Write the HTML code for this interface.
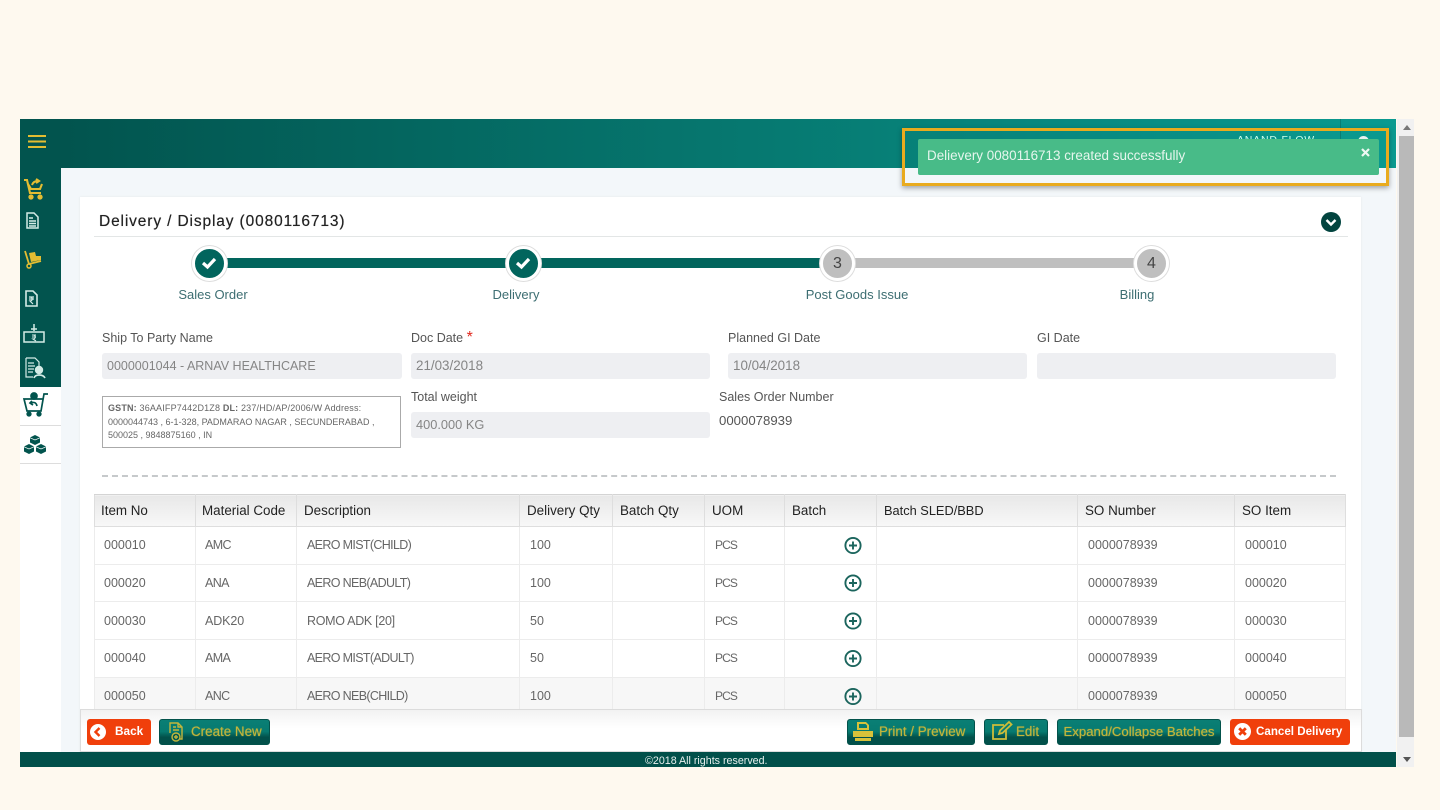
<!DOCTYPE html>
<html><head><meta charset="utf-8"><style>
html,body{margin:0;padding:0;width:1440px;height:810px;overflow:hidden;background:#fef9ef;font-family:"Liberation Sans",sans-serif;}
.a{position:absolute;white-space:nowrap;}
.t{position:absolute;white-space:nowrap;font-size:12.5px;line-height:16px;color:#555;}
.inp{position:absolute;background:#eeeff2;border-radius:3px;height:26px;line-height:26px;font-size:13.4px;color:#858585;padding-left:5px;box-sizing:border-box;}
.c{position:absolute;border-radius:50%;box-sizing:border-box;}
.lbl{position:absolute;white-space:nowrap;font-size:13px;line-height:16px;color:#3d6e72;transform:translateX(-50%);}
table{position:absolute;left:94px;top:494px;width:1252px;border-collapse:collapse;table-layout:fixed;font-size:12.5px;background:#fff;}
th{height:32px;padding:0 0 0 6px;box-sizing:border-box;text-align:left;font-weight:normal;color:#222;background:linear-gradient(#e8e8e8,#f8f8f8);border:1px solid #dedede;border-top:1px solid #d4d4d4;font-size:13.4px;}
td{padding:0 0 0 9px;box-sizing:border-box;color:#666;border:1px solid #ececec;height:37.7px;}
th:nth-child(n+3){padding-left:7px;}
td:nth-child(n+3){padding-left:10px;}
tr.l td{background:#f7f7f7;}
td.d{letter-spacing:-.65px;}
td.m{letter-spacing:-.6px;}
td.u{font-size:12px;letter-spacing:-.9px;}
.btn{position:absolute;top:719px;height:26px;border-radius:3px;font-size:13.4px;line-height:25px;box-sizing:border-box;white-space:nowrap;}
.g{background:linear-gradient(#0a7f75 0%,#077a70 48%,#02504a 72%,#02504a 100%);color:#c2b63c;border:1px solid #03524b;text-shadow:0 0 1px #a9a23a;line-height:23px;}
.r{background:#f03f0b;color:#fff;font-weight:bold;font-size:11.8px;}
svg{position:absolute;overflow:visible;}
</style></head><body>
<div class="a" style="left:20px;top:119px;width:1376px;height:648px;background:#f3f7fa;"></div>
<div class="a" style="left:61px;top:119px;width:1335px;height:49px;background:linear-gradient(90deg,#02544e,#0a9a90);"></div>
<div class="a" style="left:20px;top:119px;width:41px;height:268px;background:#02544e;"></div>
<div class="a" style="left:20px;top:387px;width:41px;height:380px;background:#fff;"></div>
<div class="a" style="left:20px;top:425px;width:41px;height:1px;background:#ddd;"></div>
<div class="a" style="left:20px;top:463px;width:41px;height:1px;background:#ddd;"></div>
<svg style="left:28px;top:134px" width="18" height="15"><path d="M0 2H18M0 7.500H18M0 13H18" stroke="#e3bd32" stroke-width="2"/></svg>
<svg style="left:24px;top:179px" width="20" height="21" fill="none" stroke="#e3bd32" stroke-width="2.100"><path d="M0 1H3L6 14H17M4 5L7 10H16L18 5"/><path d="M8 6C9 3 11 2 14 2M12 0L15 2L12 4"/><circle cx="7" cy="18" r="1.600" fill="#e3bd32"/><circle cx="16" cy="18" r="1.600" fill="#e3bd32"/></svg>
<svg style="left:26px;top:212px" width="13" height="17" fill="none" stroke="#d4ebe6" stroke-width="1.500"><path d="M1 1H8L12 5V16H1Z"/><path d="M3 6H7M3 9H10M3 11.500H10M3 14H10" stroke-width="1.400"/></svg>
<svg style="left:24px;top:250px" width="18" height="19" fill="none"><path d="M1 1L5 14" stroke="#e3bd32" stroke-width="1.800"/><path d="M5 14L17 11" stroke="#e3bd32" stroke-width="1.800"/><circle cx="5" cy="16" r="2" stroke="#e3bd32" stroke-width="1.500"/><path d="M5 3L11 2L12 6L17 6L17 10L7 12Z" fill="#e3bd32"/></svg>
<svg style="left:25px;top:290px" width="13" height="17" fill="none" stroke="#d4ebe6" stroke-width="1.600"><path d="M1 1H8L12 5V16H1Z"/><path d="M4 7H9M4 9H9M5 7C8 7 8 11 5 11L8 14" stroke-width="1.200"/></svg>
<svg style="left:23px;top:324px" width="22" height="19" fill="none" stroke="#d4ebe6" stroke-width="1.500"><path d="M1 8H21V18H1Z"/><path d="M11 0V7M8 5H14" /><path d="M9 11H13M9 13H13M10 11C13 11 13 15 10 15L13 17" stroke-width="1.100"/></svg>
<svg style="left:25px;top:357px" width="23" height="24" fill="none" stroke="#d4ebe6" stroke-width="1.200"><path d="M1 1H10L14 5V9M1 1V20H8"/><path d="M3 6H9M3 9H10M3 12H9M3 15H8"/><circle cx="14" cy="13" r="3.600" fill="#d4ebe6"/><path d="M9 21C10 17 18 17 20 21" stroke-width="1.700"/></svg>
<svg style="left:23px;top:392px" width="26" height="25" fill="none" stroke="#02544e" stroke-width="1.700"><path d="M25 2H21L18 19H4L1 7H20"/><circle cx="6" cy="22" r="1.800" fill="#02544e"/><circle cx="16" cy="22" r="1.800" fill="#02544e"/><circle cx="11" cy="4" r="3" fill="#02544e"/><path d="M14 14C13 10 11 10 7 11M9 9L7 11L10 13"/></svg>
<svg style="left:23px;top:435px" width="24" height="20" fill="#02544e"><path d="M12 0L17 2.500V7.500L12 10L7 7.500V2.500Z"/><path d="M6 9L11 11.500V16.500L6 19L1 16.500V11.500Z"/><path d="M18 9L23 11.500V16.500L18 19L13 16.500V11.500Z"/><path d="M7 2.800L12 5L17 2.800M1 11.800L6 14L11 11.800M13 11.800L18 14L23 11.800" stroke="#fff" stroke-width=".7" fill="none"/></svg>

<div class="a" style="left:1237px;top:134px;font-size:10.500px;line-height:12px;color:#cfe;letter-spacing:.8px;height:5px;overflow:hidden;">ANAND FLOW</div>
<div class="c" style="left:1358px;top:136px;width:11px;height:11px;background:#e8f0ee;"></div>
<div class="a" style="left:1340px;top:119px;width:1px;height:49px;background:#0a7d74;"></div>

<div class="a" style="left:1397px;top:119px;width:17px;height:648px;background:#f1f1f1;"></div>
<div class="a" style="left:1399px;top:136px;width:15px;height:601px;background:#b9b9b9;"></div>
<div class="a" style="left:1403px;top:125px;border:4px solid transparent;border-top:0;border-bottom:5px solid #777;"></div>
<div class="a" style="left:1403px;top:757px;border:4px solid transparent;border-bottom:0;border-top:5px solid #555;"></div>

<div class="a" style="left:80px;top:197px;width:1281px;height:556px;background:#fff;box-shadow:0 0 2px #e3e6e8;"></div>
<div class="a" style="left:99px;top:212px;font-size:15.500px;line-height:20px;color:#222;letter-spacing:.87px;text-shadow:0 0 .5px #444;">Delivery / Display (0080116713)</div>
<div class="a" style="left:94px;top:236px;width:1254px;height:1px;background:#e3e6e6;"></div>
<svg style="left:1321px;top:212px" width="20" height="20"><circle cx="10" cy="10" r="10" fill="#02443f"/><path d="M5.500 8L10 12.500L14.500 8" stroke="#fff" stroke-width="2.400" fill="none"/></svg>

<div class="a" style="left:225px;top:258px;width:600px;height:10px;background:#02655d;"></div>
<div class="a" style="left:850px;top:258px;width:290px;height:10px;background:#bfbfbf;"></div>
<div class="c" style="left:192px;top:246px;width:35px;height:35px;background:#02655d;border:3px solid #fff;box-shadow:0 0 0 1px #ddd;"></div>
<div class="c" style="left:506px;top:246px;width:35px;height:35px;background:#02655d;border:3px solid #fff;box-shadow:0 0 0 1px #ddd;"></div>
<svg style="left:201px;top:256px" width="16" height="14"><path d="M2 7L6.500 11L14 3" stroke="#fff" stroke-width="3.200" fill="none"/></svg>
<svg style="left:515px;top:256px" width="16" height="14"><path d="M2 7L6.500 11L14 3" stroke="#fff" stroke-width="3.200" fill="none"/></svg>
<div class="c" style="left:820px;top:246px;width:35px;height:35px;background:#bfbfbf;border:3px solid #fff;box-shadow:0 0 0 1px #ddd;text-align:center;font-size:16px;line-height:29px;color:#444;">3</div>
<div class="c" style="left:1134px;top:246px;width:35px;height:35px;background:#bfbfbf;border:3px solid #fff;box-shadow:0 0 0 1px #ddd;text-align:center;font-size:16px;line-height:29px;color:#444;">4</div>
<div class="lbl" style="left:213px;top:287px;">Sales Order</div>
<div class="lbl" style="left:516px;top:287px;">Delivery</div>
<div class="lbl" style="left:857px;top:287px;">Post Goods Issue</div>
<div class="lbl" style="left:1137px;top:287px;">Billing</div>

<div class="t" style="left:102px;top:330px;">Ship To Party Name</div>
<div class="t" style="left:411px;top:330px;">Doc Date <span style="color:#e0261c;font-size:16px;">*</span></div>
<div class="t" style="left:728px;top:330px;">Planned GI Date</div>
<div class="t" style="left:1037px;top:330px;">GI Date</div>
<div class="inp" style="left:102px;top:353px;width:300px;font-size:12.500px;">0000001044 - ARNAV HEALTHCARE</div>
<div class="inp" style="left:411px;top:353px;width:299px;">21/03/2018</div>
<div class="inp" style="left:728px;top:353px;width:299px;">10/04/2018</div>
<div class="inp" style="left:1037px;top:353px;width:299px;"></div>
<div class="a" style="left:102px;top:396px;width:299px;height:52px;border:1px solid #aaa;box-sizing:border-box;padding:5px 0 0 5px;font-size:9px;line-height:13.500px;color:#666;"><span style="letter-spacing:.17px;"><b>GSTN:</b> 36AAIFP7442D1Z8 <b>DL:</b> 237/HD/AP/2006/W Address:</span><br>0000044743 , 6-1-328, PADMARAO NAGAR , SECUNDERABAD ,<br>500025 , 9848875160 , IN</div>
<div class="t" style="left:411px;top:389px;">Total weight</div>
<div class="inp" style="left:411px;top:412px;width:299px;font-size:12.800px;">400.000 KG</div>
<div class="t" style="left:719px;top:389px;">Sales Order Number</div>
<div class="t" style="left:719px;top:413px;font-size:13.200px;">0000078939</div>
<div class="a" style="left:102px;top:475px;width:1234px;height:0;border-top:2px dashed #c6c9cb;"></div>

<div class="a" style="left:80px;top:494px;width:1281px;height:216px;overflow:hidden;">
<table style="left:14px;top:0;">
<colgroup><col style="width:101px"><col style="width:101px"><col style="width:223px"><col style="width:93px"><col style="width:92px"><col style="width:80px"><col style="width:92px"><col style="width:201px"><col style="width:157px"><col style="width:111px"></colgroup>
<tr><th>Item No</th><th>Material Code</th><th>Description</th><th>Delivery Qty</th><th>Batch Qty</th><th>UOM</th><th>Batch</th><th style="font-size:12.800px;">Batch SLED/BBD</th><th>SO Number</th><th>SO Item</th></tr>
<tr><td>000010</td><td class="m">AMC</td><td class="d">AERO MIST(CHILD)</td><td>100</td><td></td><td class="u">PCS</td><td></td><td></td><td>0000078939</td><td>000010</td></tr>
<tr><td>000020</td><td class="m">ANA</td><td class="d">AERO NEB(ADULT)</td><td>100</td><td></td><td class="u">PCS</td><td></td><td></td><td>0000078939</td><td>000020</td></tr>
<tr><td>000030</td><td style="letter-spacing:-.1px">ADK20</td><td style="letter-spacing:-.3px">ROMO ADK [20]</td><td>50</td><td></td><td class="u">PCS</td><td></td><td></td><td>0000078939</td><td>000030</td></tr>
<tr><td>000040</td><td class="m">AMA</td><td class="d">AERO MIST(ADULT)</td><td>50</td><td></td><td class="u">PCS</td><td></td><td></td><td>0000078939</td><td>000040</td></tr>
<tr class="l"><td>000050</td><td class="m">ANC</td><td class="d">AERO NEB(CHILD)</td><td>100</td><td></td><td class="u">PCS</td><td></td><td></td><td>0000078939</td><td>000050</td></tr>
</table></div>
<svg style="left:844px;top:536px" width="18" height="170" fill="none" stroke="#1b655d" stroke-width="1.900"><circle cx="9" cy="9.500" r="7.600"/><path d="M5 9.500H13M9 5.500V13.500"/><circle cx="9" cy="47" r="7.600"/><path d="M5 47H13M9 43V51"/><circle cx="9" cy="85" r="7.600"/><path d="M5 85H13M9 81V89"/><circle cx="9" cy="122.500" r="7.600"/><path d="M5 122.500H13M9 118.500V126.500"/><circle cx="9" cy="160.500" r="7.600"/><path d="M5 160.500H13M9 156.500V164.500"/></svg>

<div class="a" style="left:80px;top:709px;width:1282px;height:43px;box-sizing:border-box;background:linear-gradient(#f2f2f2,#fff 45%);border:1px solid #dcdcdc;"></div>
<div class="btn r" style="left:87px;width:64px;padding-left:28px;">Back</div>
<svg style="left:90px;top:724px" width="16" height="16"><circle cx="8" cy="8" r="8" fill="#fff"/><path d="M9.500 4L5.500 8L9.500 12" stroke="#f03f0b" stroke-width="2.400" fill="none"/></svg>
<div class="btn g" style="left:159px;width:111px;padding-left:31px;">Create New</div>
<svg style="left:167px;top:722px" width="16" height="20" fill="none" stroke="#c2b63c" stroke-width="1.400"><path d="M3 11V1H11L15 5V17H13M11 1V5H15M6 5H9M6 8H12"/><circle cx="9" cy="15" r="4" fill="#04584f"/><path d="M7 15H11M9 13V17"/></svg>
<div class="btn g" style="left:847px;width:128px;padding-left:31px;">Print / Preview</div>
<svg style="left:852px;top:721px" width="22" height="21" fill="#d8c23a"><path d="M5 1H14L17 4V9H5ZM7 3V7H15V4.500L13.500 3Z"/><path d="M1 10H21V16H1ZM3 17H19V20H3Z"/></svg>
<div class="btn g" style="left:984px;width:64px;padding-left:31px;">Edit</div>
<svg style="left:991px;top:721px" width="22" height="20" fill="none" stroke="#cdbd3a" stroke-width="1.800"><path d="M13 4H2V18H15V9"/><path d="M8 13L9 9.500L18 1L20.500 3.500L11.500 12Z"/></svg>
<div class="btn g" style="left:1057px;width:164px;text-align:center;font-size:13.200px;">Expand/Collapse Batches</div>
<div class="btn r" style="left:1230px;width:120px;padding-left:26px;font-size:11.600px;">Cancel Delivery</div>
<svg style="left:1234px;top:723px" width="17" height="17"><circle cx="8.500" cy="8.500" r="8.500" fill="#fff"/><path d="M5.200 5.200L11.800 11.800M11.800 5.200L5.200 11.800" stroke="#f03f0b" stroke-width="2.800"/></svg>

<div class="a" style="left:20px;top:752px;width:1376px;height:15px;background:#02504a;text-align:center;color:#e8f0ee;font-size:10.700px;line-height:18px;"><span style="position:absolute;left:625px;">©2018 All rights reserved.</span></div>

<div class="a" style="left:902px;top:128px;width:487px;height:58px;box-sizing:border-box;border:3px solid #e9ab1e;box-shadow:0 2px 5px rgba(0,0,0,.35);"></div>
<div class="a" style="left:918px;top:139px;width:461px;height:36px;background:#48bb88;border-radius:2px;"></div>
<div class="a" style="left:927px;top:148px;font-size:13.450px;line-height:16px;color:#e6f6ee;">Delievery 0080116713 created successfully</div>
<svg style="left:1361px;top:148px" width="9" height="9"><path d="M1 1L8 8M8 1L1 8" stroke="#eef8f3" stroke-width="2.200"/></svg>
</body></html>
